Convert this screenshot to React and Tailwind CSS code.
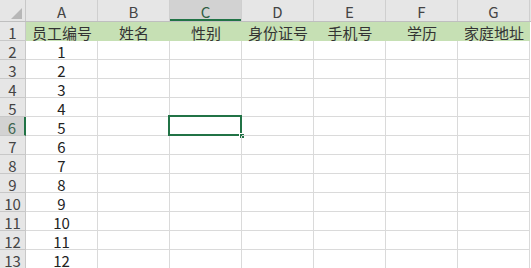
import React from "react";

const cols = ["A", "B", "C", "D", "E", "F", "G"];
const heads = ["员工编号", "姓名", "性别", "身份证号", "手机号", "学历", "家庭地址"];

export default function App() {
  const rows = Array.from({ length: 12 }, (_, i) => i + 2);
  return (
    <div className="w-[531px] h-[268px] overflow-hidden bg-white font-['Noto_Sans_CJK_SC','Noto_Sans',sans-serif] text-[#222]">
      {/* column header */}
      <div className="flex h-[22px] bg-[#e6e6e6] border-b border-[#bfbfbf]">
        <div className="w-[26px] shrink-0 border-r border-[#c8c8c8] flex items-end justify-end pr-[3px] pb-[2px]">
          <svg width="11" height="11" viewBox="0 0 11 11">
            <polygon points="11,0 11,11 0,11" fill="#b7b7b7" />
          </svg>
        </div>
        {cols.map((c) => (
          <div
            key={c}
            className={
              "w-[72px] shrink-0 border-r border-[#cfcfcf] flex items-end justify-center text-[15px] leading-[17px] pb-[1px] " +
              (c === "C"
                ? "bg-[#d2d2d2] text-[#2f5e42] shadow-[inset_0_-2px_0_#217346]"
                : "text-[#444]")
            }
          >
            {c}
          </div>
        ))}
      </div>
      {/* row 1 */}
      <div className="flex h-[19px]">
        <div className="w-[26px] shrink-0 bg-[#e6e6e6] border-r border-b border-[#c8c8c8] flex items-center justify-center text-[15px] leading-[17px] pt-[2px] text-[#444]">
          1
        </div>
        {heads.map((h) => (
          <div
            key={h}
            className="w-[72px] shrink-0 bg-[#c6e0b4] flex items-center justify-center text-[15px] leading-[17px] pt-[2px] text-[#333]"
          >
            {h}
          </div>
        ))}
      </div>
      {rows.map((r) => (
        <div key={r} className="flex h-[19px]">
          <div
            className={
              "w-[26px] shrink-0 border-b flex items-center justify-center text-[15px] leading-[17px] pt-[2px] " +
              (r === 6
                ? "bg-[#d2d2d2] text-[#3e6650] border-[#c8c8c8] border-r-2 border-r-[#217346]"
                : "bg-[#e6e6e6] text-[#444] border-[#c8c8c8] border-r")
            }
          >
            {r}
          </div>
          {cols.map((c, ci) => (
            <div
              key={c}
              className="relative w-[72px] shrink-0 border-r border-b border-[#dadada] flex items-center justify-center text-[15px] leading-[17px] pt-[2px] text-[#222]"
            >
              {ci === 0 ? r - 1 : ""}
              {c === "C" && r === 6 && (
                <>
                  <div className="absolute left-[-2px] top-[-2px] w-[74px] h-[21px] border-2 border-[#217346]" />
                  <div className="absolute right-[-4px] bottom-[-4px] w-[6px] h-[6px] bg-[#217346] border border-white" />
                </>
              )}
            </div>
          ))}
        </div>
      ))}
    </div>
  );
}
